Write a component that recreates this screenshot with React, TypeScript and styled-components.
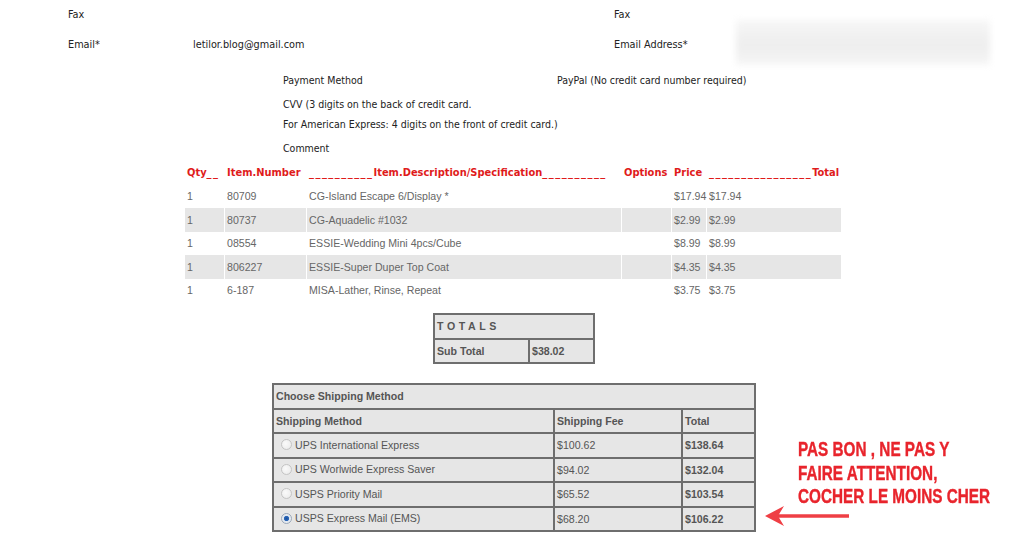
import React from "react";
import styled, { createGlobalStyle } from "styled-components";

const GlobalStyle = createGlobalStyle`
  html, body { margin: 0; padding: 0; background: #fff; }
  body { font-family: "DejaVu Sans Condensed", "DejaVu Sans", sans-serif; color: #222; }
`;

const Page = styled.div`
  position: relative;
  width: 1024px;
  height: 537px;
  overflow: hidden;
`;

const ContactGrid = styled.div`
  display: grid;
  grid-template-columns: 125px 421px 122px 1fr;
  grid-template-rows: 28px 28px;
  row-gap: 2px;
  padding-left: 68px;
  align-items: center;
  font-size: 10.8px;
  color: #222;
`;

const Cell = styled.div`
  white-space: nowrap;
`;

const Redacted = styled.div`
  width: 254px;
  height: 45px;
  margin-top: -3px;
  align-self: center;
  background: linear-gradient(180deg, #f7f7f7 0%, #efefef 45%, #eeeeee 60%, #f6f6f6 100%);
  filter: blur(3px);
`;

const PaymentGrid = styled.div`
  display: grid;
  grid-template-columns: 274px 1fr;
  row-gap: 4px;
  margin-top: 12px;
  padding-left: 283px;
  font-size: 10.5px;
  line-height: 20px;
  color: #222;
`;

const ItemsTable = styled.table`
  margin: 3px 0 0 184px;
  width: 658px;
  table-layout: fixed;
  border-collapse: separate;
  border-spacing: 1px 0;
  font-family: "Liberation Sans", Arial, sans-serif;
  font-size: 10.6px;
  color: #666;
`;

const HeadCell = styled.th`
  height: 23.5px;
  padding: 0 0 0 2px;
  text-align: left;
  font-family: "DejaVu Sans Condensed", "DejaVu Sans", sans-serif;
  font-size: 11px;
  font-weight: bold;
  color: #e01b1b;
  white-space: nowrap;
  overflow: visible;
`;

const Rule = styled.span`
  letter-spacing: 1.5px;
`;

const ItemCell = styled.td<{ $shaded: boolean }>`
  height: 23.5px;
  padding: 0 0 0 2px;
  background: ${(p) => (p.$shaded ? "#e6e6e6" : "transparent")};
  white-space: nowrap;
  vertical-align: middle;
`;

const BoxTable = styled.table<{ $width: number; $left: number }>`
  margin-left: ${(p) => p.$left}px;
  width: ${(p) => p.$width}px;
  table-layout: fixed;
  border-collapse: collapse;
  border: 2px solid #6e6e6e;
  background: #e6e6e6;
  font-family: "Liberation Sans", Arial, sans-serif;
  font-size: 10.6px;
  color: #555;
`;

const TotalsTable = styled(BoxTable)`
  margin-top: 11px;
`;

const ShippingTable = styled(BoxTable)`
  margin-top: 19px;
`;

const BoxCell = styled.td<{ $bold?: boolean; $spaced?: boolean }>`
  border: 2px solid #6e6e6e;
  height: 22.5px;
  padding: 0 2px;
  font-weight: ${(p) => (p.$bold ? "bold" : "normal")};
  letter-spacing: ${(p) => (p.$spaced ? "3.6px" : "normal")};
  white-space: nowrap;
  text-align: left;
  vertical-align: middle;
  overflow: hidden;
`;

const RadioLabel = styled.label`
  display: inline-flex;
  align-items: center;
  gap: 3px;
  padding-left: 5px;
`;

const Radio = styled.span<{ $checked: boolean }>`
  display: inline-block;
  width: 9px;
  height: 9px;
  border-radius: 50%;
  border: 1px solid ${(p) => (p.$checked ? "#9aa7b8" : "#c4c4c4")};
  background: ${(p) =>
    p.$checked
      ? "radial-gradient(circle at 50% 50%, #1b4f9a 0, #2a66b8 2.2px, #dfe6ef 3px, #f4f4f4 100%)"
      : "radial-gradient(circle at 40% 40%, #fafafa 0, #e8e8e8 100%)"};
`;

const Annotation = styled.div`
  position: absolute;
  left: 798px;
  top: 438px;
  font-family: "Liberation Sans", Arial, sans-serif;
  font-weight: bold;
  font-size: 20px;
  line-height: 23.5px;
  color: #e8242c;
  white-space: nowrap;
  transform: scaleX(0.765);
  transform-origin: left top;
  -webkit-text-stroke: 0.4px #e8242c;
`;

const Arrow = styled.svg`
  position: absolute;
  left: 763px;
  top: 503px;
`;

const items = [
  ["1", "80709", "CG-Island Escape 6/Display *", "", "$17.94", "$17.94"],
  ["1", "80737", "CG-Aquadelic #1032", "", "$2.99", "$2.99"],
  ["1", "08554", "ESSIE-Wedding Mini 4pcs/Cube", "", "$8.99", "$8.99"],
  ["1", "806227", "ESSIE-Super Duper Top Coat", "", "$4.35", "$4.35"],
  ["1", "6-187", "MISA-Lather, Rinse, Repeat", "", "$3.75", "$3.75"],
];

const shipping = [
  ["UPS International Express", "$100.62", "$138.64", false],
  ["UPS Worlwide Express Saver", "$94.02", "$132.04", false],
  ["USPS Priority Mail", "$65.52", "$103.54", false],
  ["USPS Express Mail (EMS)", "$68.20", "$106.22", true],
] as const;

export default function App() {
  return (
    <Page>
      <GlobalStyle />
      <ContactGrid>
        <Cell>Fax</Cell>
        <Cell />
        <Cell>Fax</Cell>
        <Cell />
        <Cell>Email*</Cell>
        <Cell>letilor.blog@gmail.com</Cell>
        <Cell>Email Address*</Cell>
        <Redacted />
      </ContactGrid>

      <PaymentGrid>
        <Cell>Payment Method</Cell>
        <Cell>PayPal (No credit card number required)</Cell>
        <Cell>
          CVV (3 digits on the back of credit card.
          <br />
          For American Express: 4 digits on the front of credit card.)
        </Cell>
        <Cell />
        <Cell>Comment</Cell>
        <Cell />
      </PaymentGrid>

      <ItemsTable>
        <colgroup>
          <col style={{ width: 39 }} />
          <col style={{ width: 81 }} />
          <col style={{ width: 314 }} />
          <col style={{ width: 49 }} />
          <col style={{ width: 34 }} />
          <col style={{ width: 134 }} />
        </colgroup>
        <thead>
          <tr>
            <HeadCell>
              Qty<Rule>__</Rule>
            </HeadCell>
            <HeadCell>Item.Number</HeadCell>
            <HeadCell>
              <Rule>__________</Rule>Item.Description/Specification<Rule>__________</Rule>
            </HeadCell>
            <HeadCell>Options</HeadCell>
            <HeadCell>Price</HeadCell>
            <HeadCell>
              <Rule>________________</Rule>Total
            </HeadCell>
          </tr>
        </thead>
        <tbody>
          {items.map((row, i) => (
            <tr key={i}>
              {row.map((c, j) => (
                <ItemCell key={j} $shaded={i % 2 === 1}>
                  {c}
                </ItemCell>
              ))}
            </tr>
          ))}
        </tbody>
      </ItemsTable>

      <TotalsTable $width={160} $left={433}>
        <colgroup>
          <col style={{ width: 95 }} />
          <col style={{ width: 65 }} />
        </colgroup>
        <tbody>
          <tr>
            <BoxCell colSpan={2} $bold $spaced>
              TOTALS
            </BoxCell>
          </tr>
          <tr>
            <BoxCell $bold>Sub Total</BoxCell>
            <BoxCell $bold>$38.02</BoxCell>
          </tr>
        </tbody>
      </TotalsTable>

      <ShippingTable $width={482} $left={272}>
        <colgroup>
          <col style={{ width: 281 }} />
          <col style={{ width: 128 }} />
          <col style={{ width: 73 }} />
        </colgroup>
        <tbody>
          <tr>
            <BoxCell colSpan={3} $bold>
              Choose Shipping Method
            </BoxCell>
          </tr>
          <tr>
            <BoxCell $bold>Shipping Method</BoxCell>
            <BoxCell $bold>Shipping Fee</BoxCell>
            <BoxCell $bold>Total</BoxCell>
          </tr>
          {shipping.map(([name, fee, total, checked]) => (
            <tr key={name}>
              <BoxCell>
                <RadioLabel>
                  <Radio $checked={checked} />
                  {name}
                </RadioLabel>
              </BoxCell>
              <BoxCell>{fee}</BoxCell>
              <BoxCell $bold>{total}</BoxCell>
            </tr>
          ))}
        </tbody>
      </ShippingTable>

      <Annotation>
        PAS BON , NE PAS Y
        <br />
        FAIRE ATTENTION,
        <br />
        COCHER LE MOINS CHER
      </Annotation>
      <Arrow width="90" height="26" viewBox="0 0 90 26">
        <line x1="12" y1="13" x2="86" y2="13" stroke="#ef3f45" strokeWidth="3.5" />
        <path d="M2 13 L21 3 L15 13 L21 23 Z" fill="#ef3f45" />
      </Arrow>
    </Page>
  );
}
